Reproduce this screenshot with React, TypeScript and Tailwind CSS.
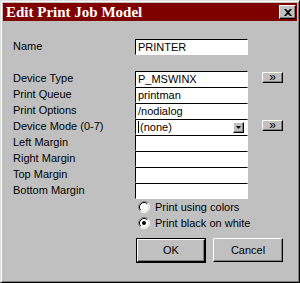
import React from 'react';

const FIELD =
  'h-[16px] w-[113px] bg-white border border-t-black border-l-black border-r-white border-b-white flex items-center pl-[2px] text-[11px] leading-none text-black';

const RAISED =
  'bg-[#c0c0c0] border border-t-white border-l-white border-r-black border-b-black shadow-[inset_-1px_-1px_0_#808080]';

function Radio({ checked }: { checked?: boolean }) {
  return (
    <svg width="12" height="12" viewBox="0 0 12 12" className="shrink-0">
      <circle cx="6" cy="6" r="5" fill="#fff" />
      <path d="M2.11 9.89A5.5 5.5 0 0 1 9.89 2.11" fill="none" stroke="#808080" strokeWidth="1" />
      <path d="M9.89 2.11A5.5 5.5 0 0 1 2.11 9.89" fill="none" stroke="#fff" strokeWidth="1" />
      <path d="M2.82 9.18A4.5 4.5 0 0 1 9.18 2.82" fill="none" stroke="#000" strokeWidth="1" />
      <path d="M9.18 2.82A4.5 4.5 0 0 1 2.82 9.18" fill="none" stroke="#dfdfdf" strokeWidth="1" />
      {checked && <circle cx="6" cy="6" r="2" fill="#000" />}
    </svg>
  );
}

function MoreButton() {
  return (
    <div
      className={`${RAISED} ml-[14px] mt-[1px] self-start w-[21px] h-[11px] flex items-center justify-center text-[12px] leading-none text-black`}
    >
      <span className="-mt-[2px]">»</span>
    </div>
  );
}

function Row({ label, children }: { label: string; children: React.ReactNode }) {
  return (
    <div className="flex h-[16px]">
      <div className="w-[122px] text-[11px] leading-[15px] text-black">{label}</div>
      {children}
    </div>
  );
}

export default function App() {
  const margins = ['Left Margin', 'Right Margin', 'Top Margin', 'Bottom Margin'];

  return (
    <div className="w-[300px] h-[283px] bg-[#c0c0c0] border border-t-[#dfdfdf] border-l-[#dfdfdf] border-r-black border-b-black shadow-[inset_1px_1px_0_#fff,inset_-1px_-1px_0_#808080] p-[2px] flex flex-col font-['Liberation_Sans',Arial,sans-serif]">
      <div className="h-[18px] bg-[#800000] flex items-center justify-between pl-[3px] pr-[1px]">
        <span className="font-['Liberation_Serif','Times_New_Roman',serif] font-bold text-[15px] leading-none text-white">
          Edit Print Job Model
        </span>
        <div className={`${RAISED} w-[17px] h-[14px] flex items-center justify-center`}>
          <svg width="8" height="7" viewBox="0 0 8 7">
            <path d="M0 0h2l2 2 2-2h2L5 3.5 8 7H6L4 5 2 7H0l3-3.5z" fill="#000" />
          </svg>
        </div>
      </div>

      <div className="pl-[10px] mt-[18px] flex flex-col">
        <Row label="Name">
          <div className={FIELD}>PRINTER</div>
        </Row>

        <div className="mt-[16px] flex flex-col">
          <Row label="Device Type">
            <div className={FIELD}>P_MSWINX</div>
            <MoreButton />
          </Row>
          <Row label="Print Queue">
            <div className={FIELD}>printman</div>
          </Row>
          <Row label="Print Options">
            <div className={FIELD}>/nodialog</div>
          </Row>
          <Row label="Device Mode (0-7)">
            <div className={`${FIELD} justify-between pr-[3px]`}>
              <div className="flex items-center">
                <div className="w-[1px] h-[12px] bg-black mr-[1px]" />
                <span>(none)</span>
              </div>
              <div className={`${RAISED} w-[11px] h-[11px] flex items-center justify-center`}>
                <svg width="5" height="3" viewBox="0 0 5 3">
                  <path d="M0 0h5L2.5 3z" fill="#000" />
                </svg>
              </div>
            </div>
            <MoreButton />
          </Row>
          {margins.map((m) => (
            <Row key={m} label={m}>
              <div className={FIELD} />
            </Row>
          ))}
        </div>

        <div className="ml-[125px] flex flex-col">
          <div className="h-[16px] flex items-center gap-[5px] text-[11px] text-black">
            <Radio />
            <span>Print using colors</span>
          </div>
          <div className="h-[16px] flex items-center gap-[5px] text-[11px] text-black">
            <Radio checked />
            <span>Print black on white</span>
          </div>
        </div>

        <div className="ml-[123px] mt-[7px] flex gap-[7px]">
          <div className="w-[70px] h-[25px] border border-black">
            <div className={`${RAISED} w-full h-full flex items-center justify-center text-[11px] text-black`}>
              OK
            </div>
          </div>
          <div className={`${RAISED} w-[70px] h-[24px] flex items-center justify-center text-[11px] text-black`}>
            Cancel
          </div>
        </div>
      </div>
    </div>
  );
}
